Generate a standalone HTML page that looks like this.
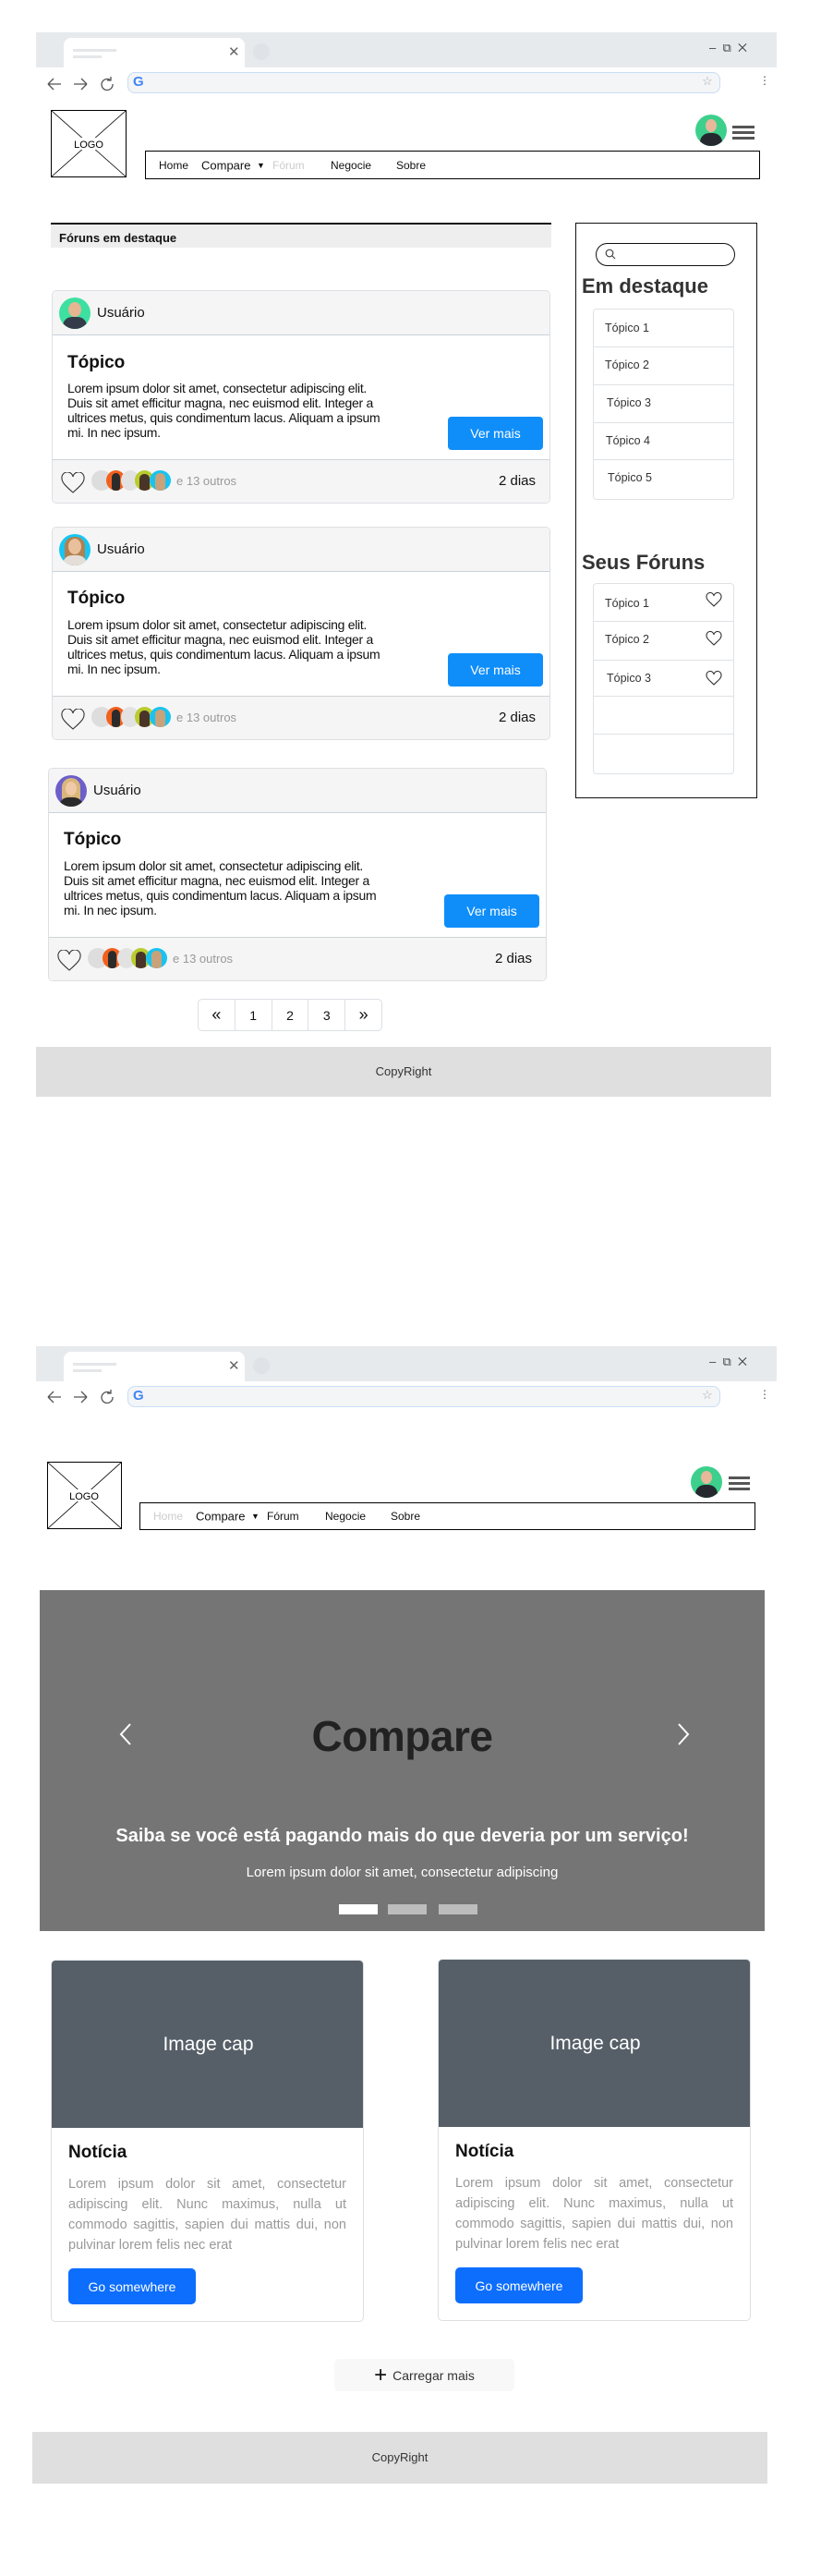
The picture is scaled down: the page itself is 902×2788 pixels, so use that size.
<!DOCTYPE html>
<html><head><meta charset="utf-8"><style>
*{box-sizing:border-box;margin:0;padding:0}
body{width:902px;height:2788px;position:relative;background:#fff;font-family:"Liberation Sans",sans-serif;color:#111;overflow:hidden}
.a{position:absolute}
.chrome{background:#e7eaed}
.tab{background:#fff;border-radius:8px 8px 0 0}
.addr{background:#f3f5f7;border:1px solid #c9dcf6;border-radius:8px}
.logo{border:1.5px solid #000;background:#fff}
.nav{border:1.5px solid #000;font-size:12px}
.nav span{position:absolute;top:50%;transform:translateY(-50%)}
.card{border:1px solid #dcdfe3;border-radius:5px;background:#fff;overflow:hidden}
.ch{background:#f5f5f5;border-bottom:1px solid #c9d3dc}
.cf{background:#f5f5f5;border-top:1.5px solid #cfd3d7}
.btn{background:#0f8efa;color:#fff;border-radius:4px;font-size:14px;display:flex;align-items:center;justify-content:center}
.txt{font-size:14px;line-height:16px;color:#111;white-space:nowrap;letter-spacing:-0.3px}
.av{border-radius:50%;overflow:hidden}
.li{border:1px solid #dfe2e5;border-radius:4px;background:#fff}
.row{position:absolute;left:0;right:0;border-top:1px solid #dfe2e5;font-size:12.5px;color:#333}
.small{font-size:13px;color:#999}
</style></head><body>

<!-- ================= PAGE 1 ================= -->
<div class="a chrome" style="left:39px;top:35px;width:802px;height:38px"></div>
<div class="a tab" style="left:69px;top:41px;width:196px;height:32px"></div>
<div class="a" style="left:79px;top:53px;width:47px;height:3px;background:#e4e6e9"></div>
<div class="a" style="left:79px;top:60px;width:31px;height:3px;background:#e4e6e9"></div>
<div class="a" style="left:247px;top:47px;font-size:15px;color:#666">✕</div>
<div class="a" style="left:274px;top:47px;width:18px;height:18px;border-radius:50%;background:#dfe2e6"></div>
<div class="a" style="left:768px;top:44px;font-size:13px;color:#444">–&nbsp;&nbsp;⧉&nbsp;&nbsp;✕</div>
<svg class="a" style="left:48px;top:80px" width="80" height="22" viewBox="0 0 80 22" fill="none" stroke="#555" stroke-width="1.3"><path d="M4 11h14M4 11l6-6M4 11l6 6"/><path d="M32 11h14M46 11l-6-6M46 11l-6 6"/><path d="M72 7a6 6 0 1 0 2 4M72 3v4h-4"/></svg>
<div class="a addr" style="left:138px;top:78px;width:642px;height:23px"></div>
<div class="a" style="left:144px;top:80px;font-size:15px;font-weight:bold;color:#4285f4">G</div>
<div class="a" style="left:760px;top:80px;font-size:13px;color:#aaa">☆</div>
<div class="a" style="left:822px;top:80px;font-size:12px;color:#555">⋮</div>

<div class="a logo" style="left:55px;top:119px;width:82px;height:73px"><svg width="80" height="71" style="position:absolute;left:0;top:0"><line x1="0" y1="0" x2="80" y2="71" stroke="#000" stroke-width="0.8"/><line x1="80" y1="0" x2="0" y2="71" stroke="#000" stroke-width="0.8"/><rect x="24" y="29" width="32" height="13" fill="#fff"/><text x="40" y="40" font-size="11" text-anchor="middle" font-family="Liberation Sans">LOGO</text></svg></div>
<div class="a av" style="left:753px;top:124px;width:34px;height:34px;background:#3dd08c"><div class="a" style="left:11px;top:5px;width:12px;height:14px;border-radius:50%;background:#e8b89a"></div><div class="a" style="left:5px;top:20px;width:24px;height:16px;border-radius:10px 10px 0 0;background:#25292f"></div></div>
<div class="a" style="left:793px;top:136px;width:24px;height:3px;background:#555;box-shadow:0 6px 0 #555,0 12px 0 #555"></div>
<div class="a nav" style="left:157px;top:163px;width:666px;height:31px">
<span style="left:14px">Home</span><span style="left:60px;font-size:13px">Compare</span><span style="left:120px;font-size:9px">▼</span><span style="left:137px;color:#ccc">Fórum</span><span style="left:200px">Negocie</span><span style="left:271px">Sobre</span></div>

<div class="a" style="left:55px;top:241px;width:542px;height:27px;background:#eeeeee;border-top:2px solid #111;font-size:13px;font-weight:bold;padding:7px 0 0 9px">Fóruns em destaque</div>

<!-- Sidebar -->
<div class="a" style="left:623px;top:241px;width:197px;height:623px;border:1.5px solid #111"></div>
<div class="a" style="left:645px;top:263px;width:151px;height:25px;border:1.5px solid #111;border-radius:13px"><svg class="a" style="left:9px;top:5px" width="12" height="12" fill="none" stroke="#444" stroke-width="1.2"><circle cx="5" cy="5" r="3.8"/><path d="M8 8l3 3"/></svg></div>
<div class="a" style="left:630px;top:297px;font-size:22px;font-weight:bold;color:#333">Em destaque</div>
<div class="a li" style="left:642px;top:334px;width:153px;height:207px">
<div class="a" style="left:12px;top:13px;font-size:12.5px;color:#333">Tópico 1</div>
<div class="row" style="top:40px;height:41px"><span class="a" style="left:12px;top:12px">Tópico 2</span></div>
<div class="row" style="top:81px;height:41px"><span class="a" style="left:14px;top:12px">Tópico 3</span></div>
<div class="row" style="top:122px;height:40px"><span class="a" style="left:13px;top:12px">Tópico 4</span></div>
<div class="row" style="top:162px;height:44px"><span class="a" style="left:15px;top:12px">Tópico 5</span></div>
</div>
<div class="a" style="left:630px;top:596px;font-size:22px;font-weight:bold;color:#333">Seus Fóruns</div>
<div class="a li" style="left:642px;top:631px;width:153px;height:207px">
<div class="a" style="left:12px;top:14px;font-size:12.5px;color:#333">Tópico 1</div>
<div class="row" style="top:40px;height:42px"><span class="a" style="left:12px;top:12px">Tópico 2</span></div>
<div class="row" style="top:82px;height:39px"><span class="a" style="left:14px;top:12px">Tópico 3</span></div>
<div class="row" style="top:121px;height:41px"></div>
<div class="row" style="top:162px;height:44px"></div>
</div>
<svg class="a" style="left:764px;top:641px" width="18" height="170" fill="none" stroke="#333" stroke-width="1.1"><path id="h" d="M9 15C4 10 1 8 1 5a3.8 3.8 0 0 1 8-1 3.8 3.8 0 0 1 8 1c0 3-3 5-8 10z"/><use href="#h" y="42"/><use href="#h" y="85"/></svg>

<div class="a card" style="left:56px;top:314px;width:540px;height:231px">
 <div class="a ch" style="left:0;top:0;width:540px;height:48px"></div>
 <div class="a av" style="left:7px;top:7px;width:34px;height:34px;background:#3de0a0"><div class="a" style="left:10px;top:5px;width:14px;height:16px;border-radius:50%;background:#e6b591"></div><div class="a" style="left:4px;top:21px;width:26px;height:16px;border-radius:10px 10px 0 0;background:#333c48"></div></div>
 <div class="a" style="left:48px;top:15px;font-size:15px">Usuário</div>
 <div class="a" style="left:16px;top:67px;font-size:19px;font-weight:bold">Tópico</div>
 <div class="a txt" style="left:16px;top:97px">Lorem ipsum dolor sit amet, consectetur adipiscing elit.<br>Duis sit amet efficitur magna, nec euismod elit. Integer a<br>ultrices metus, quis condimentum lacus. Aliquam a ipsum<br>mi. In nec ipsum.</div>
 <div class="a btn" style="left:428px;top:136px;width:103px;height:36px">Ver mais</div>
 <div class="a cf" style="left:0;top:182px;width:540px;height:49px"></div>
 <svg class="a" style="left:9px;top:196px" width="26" height="24" fill="none" stroke="#333" stroke-width="1.1"><path d="M13 22C5 15 1 11 1 7a6 6 0 0 1 12-2 6 6 0 0 1 12 2c0 4-4 8-12 15z"/></svg>
 <div class="a av" style="left:42px;top:194px;width:22px;height:22px;background:#ddd"></div>
 <div class="a av" style="left:58px;top:194px;width:21px;height:22px;background:#f2601e"><div class="a" style="left:6px;top:3px;width:9px;height:20px;background:#2b2b2b;border-radius:5px"></div></div>
 <div class="a av" style="left:74px;top:194px;width:20px;height:22px;background:#e2e2e2"></div>
 <div class="a av" style="left:89px;top:194px;width:21px;height:22px;background:#b8cc2e"><div class="a" style="left:5px;top:4px;width:11px;height:20px;background:#4a3428;border-radius:5px"></div></div>
 <div class="a av" style="left:105px;top:194px;width:23px;height:22px;background:#19c3f0"><div class="a" style="left:6px;top:3px;width:11px;height:20px;background:#c9a27a;border-radius:5px"></div></div>
 <div class="a small" style="left:134px;top:198px">e 13 outros</div>
 <div class="a" style="left:483px;top:197px;font-size:15px">2 dias</div>
</div>

<div class="a card" style="left:56px;top:570px;width:540px;height:231px">
 <div class="a ch" style="left:0;top:0;width:540px;height:48px"></div>
 <div class="a av" style="left:7px;top:7px;width:34px;height:34px;background:#16c6f2"><div class="a" style="left:6px;top:3px;width:22px;height:32px;border-radius:10px;background:#b08050"></div><div class="a" style="left:10px;top:5px;width:14px;height:17px;border-radius:50%;background:#e8c09c"></div><div class="a" style="left:4px;top:23px;width:26px;height:14px;border-radius:10px 10px 0 0;background:#e5ded8"></div></div>
 <div class="a" style="left:48px;top:15px;font-size:15px">Usuário</div>
 <div class="a" style="left:16px;top:66px;font-size:19px;font-weight:bold">Tópico</div>
 <div class="a txt" style="left:16px;top:97px">Lorem ipsum dolor sit amet, consectetur adipiscing elit.<br>Duis sit amet efficitur magna, nec euismod elit. Integer a<br>ultrices metus, quis condimentum lacus. Aliquam a ipsum<br>mi. In nec ipsum.</div>
 <div class="a btn" style="left:428px;top:136px;width:103px;height:36px">Ver mais</div>
 <div class="a cf" style="left:0;top:182px;width:540px;height:49px"></div>
 <svg class="a" style="left:9px;top:196px" width="26" height="24" fill="none" stroke="#333" stroke-width="1.1"><path d="M13 22C5 15 1 11 1 7a6 6 0 0 1 12-2 6 6 0 0 1 12 2c0 4-4 8-12 15z"/></svg>
 <div class="a av" style="left:42px;top:194px;width:22px;height:22px;background:#ddd"></div>
 <div class="a av" style="left:58px;top:194px;width:21px;height:22px;background:#f2601e"><div class="a" style="left:6px;top:3px;width:9px;height:20px;background:#2b2b2b;border-radius:5px"></div></div>
 <div class="a av" style="left:74px;top:194px;width:20px;height:22px;background:#e2e2e2"></div>
 <div class="a av" style="left:89px;top:194px;width:21px;height:22px;background:#b8cc2e"><div class="a" style="left:5px;top:4px;width:11px;height:20px;background:#4a3428;border-radius:5px"></div></div>
 <div class="a av" style="left:105px;top:194px;width:23px;height:22px;background:#19c3f0"><div class="a" style="left:6px;top:3px;width:11px;height:20px;background:#c9a27a;border-radius:5px"></div></div>
 <div class="a small" style="left:134px;top:198px">e 13 outros</div>
 <div class="a" style="left:483px;top:197px;font-size:15px">2 dias</div>
</div>

<div class="a card" style="left:52px;top:831px;width:540px;height:231px">
 <div class="a ch" style="left:0;top:0;width:540px;height:48px"></div>
 <div class="a av" style="left:7px;top:7px;width:34px;height:34px;background:#6c5fc9"><div class="a" style="left:7px;top:3px;width:20px;height:32px;border-radius:10px;background:#d9b77a"></div><div class="a" style="left:11px;top:7px;width:12px;height:15px;border-radius:50%;background:#f0c9a8"></div><div class="a" style="left:4px;top:24px;width:26px;height:12px;border-radius:10px 10px 0 0;background:#2a2a2a"></div></div>
 <div class="a" style="left:48px;top:15px;font-size:15px">Usuário</div>
 <div class="a" style="left:16px;top:66px;font-size:19px;font-weight:bold">Tópico</div>
 <div class="a txt" style="left:16px;top:97px">Lorem ipsum dolor sit amet, consectetur adipiscing elit.<br>Duis sit amet efficitur magna, nec euismod elit. Integer a<br>ultrices metus, quis condimentum lacus. Aliquam a ipsum<br>mi. In nec ipsum.</div>
 <div class="a btn" style="left:428px;top:136px;width:103px;height:36px">Ver mais</div>
 <div class="a cf" style="left:0;top:182px;width:540px;height:49px"></div>
 <svg class="a" style="left:9px;top:196px" width="26" height="24" fill="none" stroke="#333" stroke-width="1.1"><path d="M13 22C5 15 1 11 1 7a6 6 0 0 1 12-2 6 6 0 0 1 12 2c0 4-4 8-12 15z"/></svg>
 <div class="a av" style="left:42px;top:194px;width:22px;height:22px;background:#ddd"></div>
 <div class="a av" style="left:58px;top:194px;width:21px;height:22px;background:#f2601e"><div class="a" style="left:6px;top:3px;width:9px;height:20px;background:#2b2b2b;border-radius:5px"></div></div>
 <div class="a av" style="left:74px;top:194px;width:20px;height:22px;background:#e2e2e2"></div>
 <div class="a av" style="left:89px;top:194px;width:21px;height:22px;background:#b8cc2e"><div class="a" style="left:5px;top:4px;width:11px;height:20px;background:#4a3428;border-radius:5px"></div></div>
 <div class="a av" style="left:105px;top:194px;width:23px;height:22px;background:#19c3f0"><div class="a" style="left:6px;top:3px;width:11px;height:20px;background:#c9a27a;border-radius:5px"></div></div>
 <div class="a small" style="left:134px;top:198px">e 13 outros</div>
 <div class="a" style="left:483px;top:197px;font-size:15px">2 dias</div>
</div>

<!-- pagination -->
<div class="a" style="left:214px;top:1081px;width:200px;height:35px;border:1px solid #dcdfe3;border-radius:5px;display:flex;font-size:14px">
<div style="flex:1;display:flex;align-items:center;justify-content:center;border-right:1px solid #dcdfe3;font-size:18px">«</div>
<div style="flex:1;display:flex;align-items:center;justify-content:center;border-right:1px solid #dcdfe3">1</div>
<div style="flex:1;display:flex;align-items:center;justify-content:center;border-right:1px solid #dcdfe3">2</div>
<div style="flex:1;display:flex;align-items:center;justify-content:center;border-right:1px solid #dcdfe3">3</div>
<div style="flex:1;display:flex;align-items:center;justify-content:center;font-size:18px">»</div>
</div>
<div class="a" style="left:39px;top:1133px;width:796px;height:54px;background:#dfdfdf;font-size:13px;color:#333;text-align:center;line-height:54px">CopyRight</div>

<!-- ================= PAGE 2 ================= -->
<div class="a chrome" style="left:39px;top:1457px;width:802px;height:38px"></div>
<div class="a tab" style="left:69px;top:1463px;width:196px;height:32px"></div>
<div class="a" style="left:79px;top:1475px;width:47px;height:3px;background:#e4e6e9"></div>
<div class="a" style="left:79px;top:1482px;width:31px;height:3px;background:#e4e6e9"></div>
<div class="a" style="left:247px;top:1469px;font-size:15px;color:#666">✕</div>
<div class="a" style="left:274px;top:1469px;width:18px;height:18px;border-radius:50%;background:#dfe2e6"></div>
<div class="a" style="left:768px;top:1466px;font-size:13px;color:#444">–&nbsp;&nbsp;⧉&nbsp;&nbsp;✕</div>
<svg class="a" style="left:48px;top:1501px" width="80" height="22" viewBox="0 0 80 22" fill="none" stroke="#555" stroke-width="1.3"><path d="M4 11h14M4 11l6-6M4 11l6 6"/><path d="M32 11h14M46 11l-6-6M46 11l-6 6"/><path d="M72 7a6 6 0 1 0 2 4M72 3v4h-4"/></svg>
<div class="a addr" style="left:138px;top:1500px;width:642px;height:23px"></div>
<div class="a" style="left:144px;top:1502px;font-size:15px;font-weight:bold;color:#4285f4">G</div>
<div class="a" style="left:760px;top:1502px;font-size:13px;color:#aaa">☆</div>
<div class="a" style="left:822px;top:1502px;font-size:12px;color:#555">⋮</div>

<div class="a logo" style="left:51px;top:1582px;width:81px;height:73px"><svg width="79" height="71" style="position:absolute;left:0;top:0"><line x1="0" y1="0" x2="79" y2="71" stroke="#000" stroke-width="0.8"/><line x1="79" y1="0" x2="0" y2="71" stroke="#000" stroke-width="0.8"/><rect x="23" y="29" width="32" height="13" fill="#fff"/><text x="39" y="40" font-size="11" text-anchor="middle" font-family="Liberation Sans">LOGO</text></svg></div>
<div class="a av" style="left:748px;top:1587px;width:34px;height:34px;background:#3dd08c"><div class="a" style="left:11px;top:5px;width:12px;height:14px;border-radius:50%;background:#e8b89a"></div><div class="a" style="left:5px;top:20px;width:24px;height:16px;border-radius:10px 10px 0 0;background:#25292f"></div></div>
<div class="a" style="left:789px;top:1598px;width:23px;height:3px;background:#555;box-shadow:0 6px 0 #555,0 12px 0 #555"></div>
<div class="a nav" style="left:151px;top:1626px;width:667px;height:30px">
<span style="left:14px;color:#ccc">Home</span><span style="left:60px;font-size:13px">Compare</span><span style="left:120px;font-size:9px">▼</span><span style="left:137px">Fórum</span><span style="left:200px">Negocie</span><span style="left:271px">Sobre</span></div>

<div class="a" style="left:43px;top:1721px;width:785px;height:369px;background:#757575"></div>
<svg class="a" style="left:128px;top:1864px" width="620" height="26" fill="none" stroke="#fff" stroke-width="2"><path d="M13 2L3 13l10 11"/><path d="M607 2l10 11-10 11"/></svg>
<div class="a" style="left:43px;top:1852px;width:785px;text-align:center;font-size:46px;font-weight:bold;color:#222;letter-spacing:-0.5px">Compare</div>
<div class="a" style="left:43px;top:1976px;width:785px;text-align:center;font-size:20px;font-weight:bold;color:#fff">Saiba se você está pagando mais do que deveria por um serviço!</div>
<div class="a" style="left:43px;top:2018px;width:785px;text-align:center;font-size:15px;color:#fff">Lorem ipsum dolor sit amet, consectetur adipiscing</div>
<div class="a" style="left:367px;top:2061px;width:42px;height:11px;background:#fff"></div>
<div class="a" style="left:420px;top:2061px;width:42px;height:11px;background:#bdbdbd"></div>
<div class="a" style="left:475px;top:2061px;width:42px;height:11px;background:#bdbdbd"></div>

<div class="a card" style="left:55px;top:2121px;width:339px;height:392px">
 <div class="a" style="left:0;top:0;width:339px;height:181px;background:#565f68;color:#fff;font-size:21px;text-align:center;line-height:181px">Image cap</div>
 <div class="a" style="left:18px;top:197px;font-size:19px;font-weight:bold">Notícia</div>
 <div class="a" style="left:18px;top:231px;width:301px;font-size:14.5px;line-height:22px;color:#999;text-align:justify">Lorem ipsum dolor sit amet, consectetur adipiscing elit. Nunc maximus, nulla ut commodo sagittis, sapien dui mattis dui, non pulvinar lorem felis nec erat</div>
 <div class="a btn" style="left:18px;top:333px;width:138px;height:39px;background:#0d6efd;border-radius:5px">Go somewhere</div>
</div>
<div class="a card" style="left:474px;top:2120px;width:339px;height:392px">
 <div class="a" style="left:0;top:0;width:339px;height:181px;background:#565f68;color:#fff;font-size:21px;text-align:center;line-height:181px">Image cap</div>
 <div class="a" style="left:18px;top:197px;font-size:19px;font-weight:bold">Notícia</div>
 <div class="a" style="left:18px;top:231px;width:301px;font-size:14.5px;line-height:22px;color:#999;text-align:justify">Lorem ipsum dolor sit amet, consectetur adipiscing elit. Nunc maximus, nulla ut commodo sagittis, sapien dui mattis dui, non pulvinar lorem felis nec erat</div>
 <div class="a btn" style="left:18px;top:333px;width:138px;height:39px;background:#0d6efd;border-radius:5px">Go somewhere</div>
</div>

<div class="a" style="left:362px;top:2553px;width:195px;height:35px;background:#f8f8f8;border-radius:5px;font-size:14px;color:#333;display:flex;align-items:center;justify-content:center"><span style="font-size:24px;font-weight:300;margin-right:6px;color:#111">+</span>Carregar mais</div>
<div class="a" style="left:35px;top:2632px;width:796px;height:56px;background:#dfdfdf;font-size:13px;color:#333;text-align:center;line-height:56px">CopyRight</div>
</body></html>
